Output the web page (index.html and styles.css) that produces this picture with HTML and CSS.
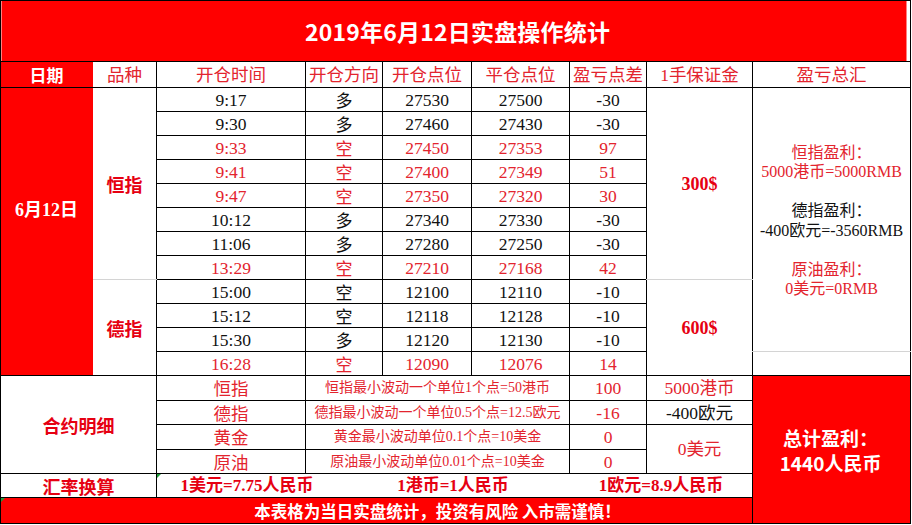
FILE: index.html
```html
<!DOCTYPE html>
<html lang="zh-CN">
<head>
<meta charset="utf-8">
<title>2019年6月12日实盘操作统计</title>
<link rel="stylesheet" href="styles.css">
</head>
<body>
<table class="sheet">
  <colgroup>
    <col class="c-date"><col class="c-kind"><col class="c-time"><col class="c-dir"><col class="c-open"><col class="c-close"><col class="c-diff"><col class="c-margin"><col class="c-sum">
  </colgroup>
  <tr class="r-title"><td colspan="9" class="title">2019年6月12日实盘操作统计</td></tr>
  <tr class="r-head">
    <th class="head-date">日期</th><th>品种</th><th>开仓时间</th><th>开仓方向</th><th>开仓点位</th><th>平仓点位</th><th>盈亏点差</th><th>1手保证金</th><th>盈亏总汇</th>
  </tr>
  <tr class="r-data">
    <td rowspan="12" class="date">6月12日</td>
    <td rowspan="8" class="kind kind-top">恒指</td>
    <td>9:17</td><td class="dir">多</td><td>27530</td><td>27500</td><td>-30</td>
    <td rowspan="8" class="margin margin-top">300$</td>
    <td rowspan="11" class="summary">
      <div class="sum-red">恒指盈利：</div>
      <div class="sum-red">5000港币=5000RMB</div>
      <div class="sum-gap"></div>
      <div class="sum-black">德指盈利：</div>
      <div class="sum-black">-400欧元=-3560RMB</div>
      <div class="sum-gap"></div>
      <div class="sum-red">原油盈利：</div>
      <div class="sum-red">0美元=0RMB</div>
    </td>
  </tr>
  <tr class="r-data"><td>9:30</td><td class="dir">多</td><td>27460</td><td>27430</td><td>-30</td></tr>
  <tr class="r-data win"><td>9:33</td><td class="dir">空</td><td>27450</td><td>27353</td><td>97</td></tr>
  <tr class="r-data win"><td>9:41</td><td class="dir">空</td><td>27400</td><td>27349</td><td>51</td></tr>
  <tr class="r-data win"><td>9:47</td><td class="dir">空</td><td>27350</td><td>27320</td><td>30</td></tr>
  <tr class="r-data"><td>10:12</td><td class="dir">多</td><td>27340</td><td>27330</td><td>-30</td></tr>
  <tr class="r-data"><td>11:06</td><td class="dir">多</td><td>27280</td><td>27250</td><td>-30</td></tr>
  <tr class="r-data win"><td>13:29</td><td class="dir">空</td><td>27210</td><td>27168</td><td>42</td></tr>
  <tr class="r-data">
    <td rowspan="4" class="kind">德指</td>
    <td>15:00</td><td class="dir">空</td><td>12100</td><td>12110</td><td>-10</td>
    <td rowspan="4" class="margin">600$</td>
  </tr>
  <tr class="r-data"><td>15:12</td><td class="dir">空</td><td>12118</td><td>12128</td><td>-10</td></tr>
  <tr class="r-data"><td>15:30</td><td class="dir">多</td><td>12120</td><td>12130</td><td>-10</td></tr>
  <tr class="r-data win"><td>16:28</td><td class="dir">空</td><td>12090</td><td>12076</td><td>14</td><td class="sum-tail"></td></tr>

  <tr class="r-c1">
    <td colspan="2" rowspan="4" class="label">合约明细</td>
    <td class="item">恒指</td>
    <td colspan="3" class="desc">恒指最小波动一个单位1个点=50港币</td>
    <td class="red">100</td>
    <td class="red">5000港币</td>
    <td rowspan="6" class="total"><div>总计盈利：</div><div>1440人民币</div></td>
  </tr>
  <tr class="r-c2">
    <td class="item">德指</td>
    <td colspan="3" class="desc">德指最小波动一个单位0.5个点=12.5欧元</td>
    <td class="red">-16</td>
    <td>-400欧元</td>
  </tr>
  <tr class="r-c1">
    <td class="item">黄金</td>
    <td colspan="3" class="desc">黄金最小波动单位0.1个点=10美金</td>
    <td class="red">0</td>
    <td rowspan="2" class="red">0美元</td>
  </tr>
  <tr class="r-c2">
    <td class="item">原油</td>
    <td colspan="3" class="desc">原油最小波动单位0.01个点=10美金</td>
    <td class="red">0</td>
  </tr>
  <tr class="r-rate">
    <td colspan="2" class="label">汇率换算</td>
    <td colspan="6" class="rates flag">
      <div class="rate-list"><span>1美元=7.75人民币</span><span>1港币=1人民币</span><span>1欧元=8.9人民币</span></div>
    </td>
  </tr>
  <tr class="r-foot">
    <td colspan="8" class="footer flag">本表格为当日实盘统计，投资有风险 入市需谨慎！</td>
  </tr>
</table>
</body>
</html>
```

FILE: styles.css
```css
html, body {
  margin: 0;
  padding: 0;
  background: #fff;
}

body {
  font-family: "Liberation Serif", "Noto Sans CJK SC", serif;
  color: #111;
}

.sheet {
  border-collapse: collapse;
  table-layout: fixed;
  width: 910px;
}

.c-date { width: 92px; }
.c-kind { width: 64px; }
.c-time { width: 149px; }
.c-dir { width: 77px; }
.c-open { width: 89px; }
.c-close { width: 98px; }
.c-diff { width: 77px; }
.c-margin { width: 106px; }
.c-sum { width: 158px; }

.sheet td, .sheet th {
  border: 1px solid #000;
  padding: 0;
  text-align: center;
  vertical-align: middle;
  font-size: 17.5px;
  font-weight: normal;
  line-height: 20px;
  white-space: nowrap;
  overflow: hidden;
}

.r-title { height: 61px; }
.r-head { height: 26px; }
.r-data { height: 24px; }
.r-c1 { height: 25px; }
.r-c2 { height: 24px; }
.r-rate { height: 24px; }
.r-foot { height: 26px; }

.title {
  background: linear-gradient(to right, #ff0000 calc(100% - 4px), #fff 0);
  color: #fff;
  font-family: "Noto Sans CJK SC", sans-serif;
  font-weight: 700 !important;
  font-size: 23px !important;
  padding-left: 4px !important;
  letter-spacing: 0.2px;
}

.r-head th {
  color: #e3242e;
}

.r-head .head-date {
  background: #ff0000;
  color: #fff;
  font-weight: 700;
  font-family: "Noto Sans CJK SC", sans-serif;
  font-size: 17px;
  border-right-color: #ff0000;
}

.date {
  background: #ff0000;
  color: #fff;
  font-weight: 700 !important;
  font-size: 18px !important;
  vertical-align: top !important;
  padding-top: 112px !important;
  border-right-color: #ff0000 !important;
}

.kind {
  color: #e60012;
  font-weight: 700 !important;
  font-size: 18px !important;
  font-family: "Noto Sans CJK SC", sans-serif;
}

.kind-top {
  border-bottom-color: #d4d4d4 !important;
}

.dir {
  font-family: "Noto Sans CJK SC", sans-serif;
  font-size: 17px !important;
}

.win td {
  color: #e3242e;
}

.margin {
  color: #e60012;
  font-weight: 700 !important;
  font-size: 18px !important;
}

.margin-top {
  border-bottom-color: #d4d4d4 !important;
}

.summary {
  font-size: 16px !important;
  line-height: 19.5px !important;
  border-bottom-color: #d4d4d4 !important;
  padding-top: 2px !important;
}

.summary div {
  height: 19.5px;
}

.sum-red { color: #e3242e; }
.sum-black { color: #111; }

.label {
  color: #e60012;
  font-weight: 700 !important;
  font-size: 18px !important;
  font-family: "Noto Sans CJK SC", sans-serif;
}

.item {
  color: #e3242e;
  font-family: "Noto Sans CJK SC", sans-serif;
}

.desc {
  color: #e3242e;
  font-size: 14px !important;
}

.red {
  color: #e3242e;
}

.total {
  background: #ff0000;
  color: #fff;
  font-family: "Noto Sans CJK SC", sans-serif;
  font-weight: 700 !important;
  font-size: 19px !important;
  line-height: 25px !important;
  padding-right: 2px !important;
}

.rates {
  color: #e60012;
  font-weight: 700 !important;
  font-size: 17px !important;
}

.rate-list {
  display: grid;
  grid-template-columns: 180px 232px 184px;
}

.footer {
  background: #ff0000;
  color: #fff;
  font-family: "Noto Sans CJK SC", sans-serif;
  font-weight: 700 !important;
  font-size: 16.5px !important;
  border-right-color: #ff0000 !important;
  padding-left: 122px !important;
}

.flag {
  position: relative;
}

.flag::before {
  content: "";
  position: absolute;
  left: 0;
  top: 0;
  border-top: 4px solid #1e9e3a;
  border-right: 4px solid transparent;
}
```
